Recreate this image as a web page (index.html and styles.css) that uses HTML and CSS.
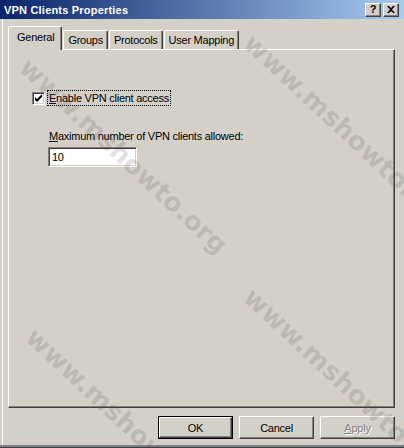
FILE: index.html
```html
<!DOCTYPE html>
<html>
<head>
<meta charset="utf-8">
<link rel="stylesheet" href="styles.css">
</head>
<body>
<div class="dialog">
  <div class="titlebar">
    <span class="title">VPN Clients Properties</span>
    <div class="caption-btns">
      <span class="cbtn help">?</span>
      <span class="cbtn close">
        <svg width="8" height="7" viewBox="0 0 8 7"><path d="M0 0h2l2 2 2-2h2L5 3.5 8 7H6L4 5 2 7H0l3-3.5z" fill="#000"/></svg>
      </span>
    </div>
  </div>
  <div class="client">
    <div class="tabs">
      <div class="tab active">General</div>
      <div class="tab">Groups</div>
      <div class="tab">Protocols</div>
      <div class="tab">User Mapping</div>
    </div>
    <div class="panel">
      <label class="check-row">
        <span class="checkbox">
          <svg width="7" height="7" viewBox="0 0 7 7"><path d="M0 2v3l2 2 5-5V-1L2 4z" fill="#000"/></svg>
        </span>
        <span class="focus"><u>E</u>nable VPN client access</span>
      </label>
      <div class="field-label"><u>M</u>aximum number of VPN clients allowed:</div>
      <div class="textbox">10</div>
    </div>
    <div class="buttons">
      <div class="default-frame"><div class="btn">OK</div></div>
      <div class="btn">Cancel</div>
      <div class="btn disabled"><span><u>A</u>pply</span></div>
    </div>
  </div>
  <div class="watermark">
    <span class="wm wm1">www.mshowto.org</span>
    <span class="wm wm2">www.mshowto.org</span>
    <span class="wm wm3">www.mshowto.org</span>
    <span class="wm wm4">www.mshowto.org</span>
  </div>
</div>
</body>
</html>
```
FILE: styles.css
```css
html, body {
  margin: 0;
  padding: 0;
}
body {
  width: 404px;
  height: 448px;
  overflow: hidden;
  background: #d4d0c8;
  font-family: "Liberation Sans", Arial, sans-serif;
  font-size: 11px;
  letter-spacing: -0.25px;
  color: #000;
}
.dialog {
  position: relative;
  width: 404px;
  height: 448px;
  box-sizing: border-box;
  border-bottom: 1px solid #404040;
  box-shadow: inset 0 -2px 0 #808080;
  overflow: hidden;
}
.titlebar {
  height: 19px;
  background: linear-gradient(to right, #0a246a, #a6caf0);
  display: flex;
  align-items: center;
  justify-content: space-between;
  padding: 0 5px 0 4px;
}
.title {
  color: #fff;
  font-weight: bold;
  font-size: 11px;
  letter-spacing: 0.2px;
}
.caption-btns {
  display: flex;
  gap: 2px;
}
.cbtn {
  width: 16px;
  height: 14px;
  box-sizing: border-box;
  background: #d4d0c8;
  border: 1px solid;
  border-color: #fff #404040 #404040 #fff;
  box-shadow: inset -1px -1px 0 #808080;
  display: flex;
  align-items: center;
  justify-content: center;
  font-weight: bold;
  font-size: 11px;
  letter-spacing: 0;
  line-height: 1;
}
.client {
  border-left: 1px solid #fff;
  margin-left: 2px;
  height: 426px;
  padding: 7px 9px 0 5px;
  box-sizing: border-box;
}
.tabs {
  display: flex;
  align-items: flex-end;
  height: 23px;
  position: relative;
  z-index: 1;
}
.tab {
  height: 19px;
  box-sizing: border-box;
  padding: 3px 4px 0 4px;
  border-left: 1px solid #fff;
  border-top: 1px solid #fff;
  border-right: 1px solid #404040;
  box-shadow: inset -1px 0 0 #808080;
  border-radius: 2px 2px 0 0;
  margin-right: 1px;
}
.tab.active {
  padding: 4px 7px 0 8px;
  margin-bottom: -1px;
  background: #d4d0c8;
  height: 24px;
}
.panel {
  height: 359px;
  box-sizing: border-box;
  border: 1px solid;
  border-color: #fff #404040 #404040 #fff;
  box-shadow: inset -1px -1px 0 #808080;
  padding: 41px 0 0 23px;
}
.check-row {
  display: flex;
  align-items: center;
  gap: 3px;
}
.checkbox {
  width: 13px;
  height: 13px;
  box-sizing: border-box;
  background: #fff;
  border: 1px solid;
  border-color: #808080 #fff #fff #808080;
  box-shadow: inset 1px 1px 0 #404040, inset -1px -1px 0 #d4d0c8;
  display: flex;
  align-items: center;
  justify-content: center;
}
.focus {
  outline: 1px dotted #000;
  padding: 1px;
  line-height: 12px;
}
.field-label {
  margin: 25px 0 0 17px;
  line-height: 13px;
}
.textbox {
  margin: 4px 0 0 16px;
  width: 89px;
  height: 20px;
  box-sizing: border-box;
  background: #fff;
  border: 1px solid;
  border-color: #808080 #fff #fff #808080;
  box-shadow: inset 1px 1px 0 #404040, inset -1px -1px 0 #d4d0c8;
  padding: 3px 0 0 3px;
  line-height: 13px;
}
.buttons {
  display: flex;
  justify-content: flex-end;
  gap: 6px;
  margin-top: 8px;
}
.default-frame {
  border: 1px solid #000;
}
.btn {
  width: 75px;
  height: 23px;
  box-sizing: border-box;
  border: 1px solid;
  border-color: #fff #404040 #404040 #fff;
  box-shadow: inset -1px -1px 0 #808080;
  display: flex;
  align-items: center;
  justify-content: center;
}
.default-frame .btn {
  width: 73px;
  height: 21px;
}
.btn.disabled span {
  color: #808080;
  text-shadow: 1px 1px 0 #fff;
}
.watermark {
  position: absolute;
  inset: 0;
  pointer-events: none;
}
.wm {
  position: absolute;
  font-family: "DejaVu Sans", sans-serif;
  font-weight: bold;
  font-size: 26px;
  letter-spacing: 0;
  color: rgba(70, 65, 60, 0.17);
  white-space: nowrap;
  transform-origin: 0 50%;
  transform: rotate(43deg);
  line-height: 1;
}
.wm1 { left: 24px; top: 50px; }
.wm2 { left: 248px; top: 26px; }
.wm3 { left: 248px; top: 280px; }
.wm4 { left: 30px; top: 320px; }
```
